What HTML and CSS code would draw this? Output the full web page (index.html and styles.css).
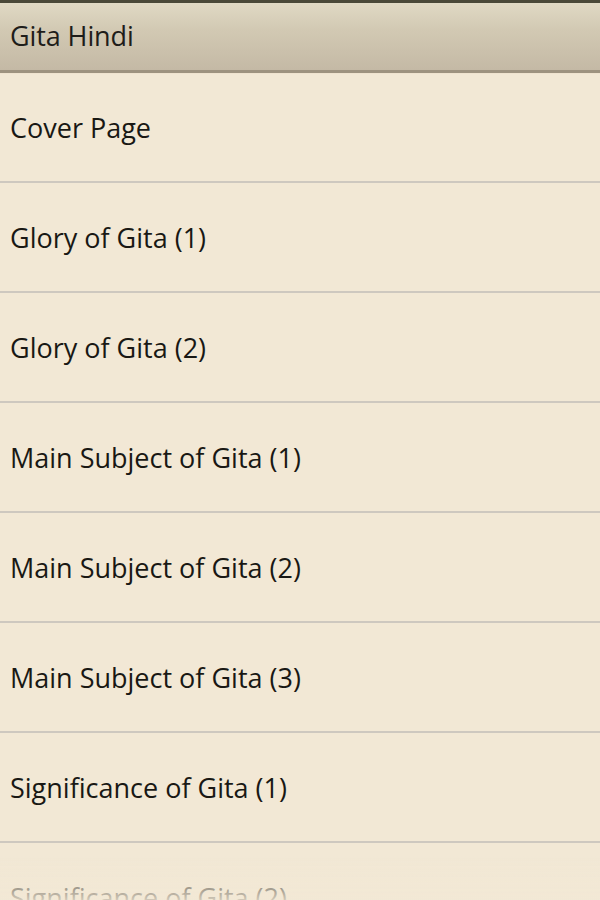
FILE: index.html
```html
<!DOCTYPE html>
<html lang="en">
<head>
  <meta charset="UTF-8">
  <meta name="viewport" content="width=device-width, initial-scale=1.0">
  <title>Gita Hindi</title>
  <link rel="stylesheet" href="styles.css">
</head>
<body>

  <div class="status-strip"></div>
  <div class="title-bar">Gita Hindi</div>

  <ul class="chapter-list">
    <li>Cover Page</li>
    <li>Glory of Gita (1)</li>
    <li>Glory of Gita (2)</li>
    <li>Main Subject of Gita (1)</li>
    <li>Main Subject of Gita (2)</li>
    <li>Main Subject of Gita (3)</li>
    <li>Significance of Gita (1)</li>
    <li>Significance of Gita (2)</li>
  </ul>

  <div class="fade"></div>

</body>
</html>
```

FILE: styles.css
```css
* {
  margin: 0;
  padding: 0;
  box-sizing: border-box;
}
html, body {
  height: 100%;
  overflow: hidden;
}
body {
  font-family: "Open Sans", "DejaVu Sans", sans-serif;
  background-color: #f2e8d5;
  color: #1c1b18;
}
.status-strip {
  height: 3px;
  background-color: #4a4838;
}
.title-bar {
  height: 70px;
  padding: 0 10px;
  display: flex;
  align-items: center;
  padding-bottom: 3px;
  font-size: 27px;
  letter-spacing: -0.1px;
  color: #1e1d1a;
  background: linear-gradient(#e0d9c4, #d2c9b3 40%, #c4b9a5);
  border-bottom: 3px solid #9d927f;
  box-shadow: 0 1px 0 #efe3cf;
}
.chapter-list {
  list-style: none;
}
.chapter-list li {
  height: 110px;
  padding: 0 10px;
  display: flex;
  align-items: center;
  font-size: 27px;
  letter-spacing: 0;
  color: #191814;
  border-bottom: 2px solid #cec8bf;
}
.chapter-list li:first-child {
  height: 109px;
  margin-top: 1px;
}
.fade {
  position: fixed;
  left: 0;
  right: 0;
  bottom: 0;
  height: 45px;
  background: linear-gradient(rgba(242, 232, 213, 0), rgba(242, 232, 213, 0.85));
}
```
